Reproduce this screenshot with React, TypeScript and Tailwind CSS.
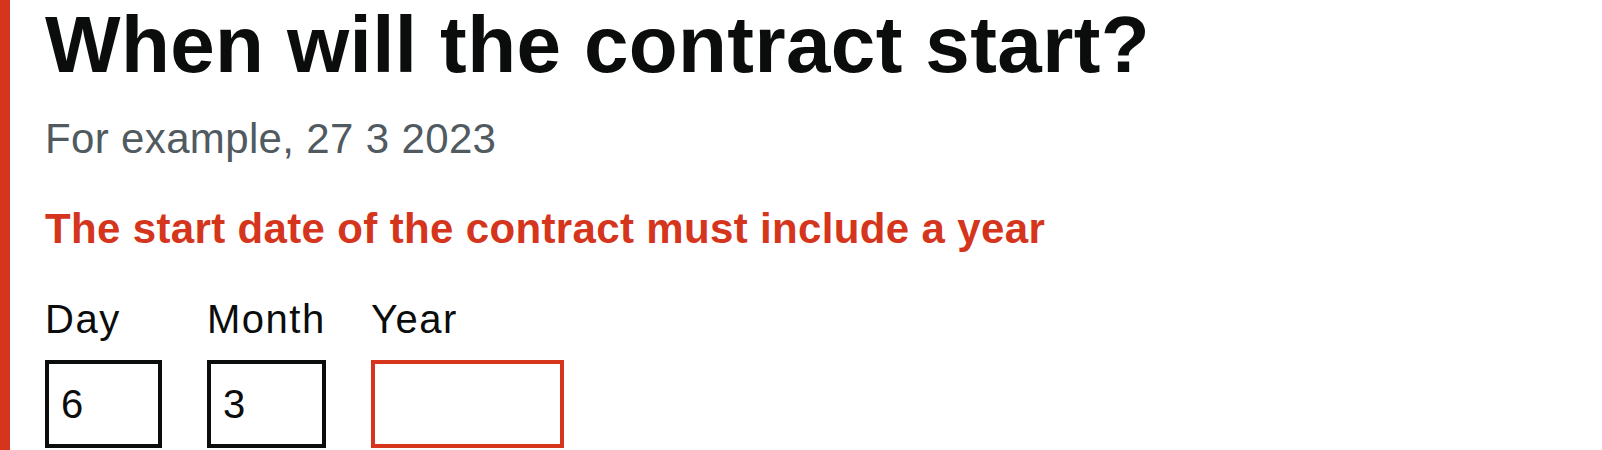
import { useState } from "react";

const FONT = "font-['Liberation_Sans',Arial,sans-serif]";

function DateField({ label, value, width, error, onChange }: {
    label: string;
    value: string;
    width: string;
    error?: boolean;
    onChange: (v: string) => void;
}) {
    return (
        <div className="flex flex-col">
            <label className="text-[40px] leading-[50px] tracking-[1.5px] text-[#0b0c0c]">{label}</label>
            <input
                type="text"
                inputMode="numeric"
                value={value}
                onChange={e => onChange(e.target.value)}
                className={`${width} mt-4 h-[88px] border-4 ${error ? "border-[#d4351c]" : "border-[#0b0c0c]"} bg-white px-3 text-[40px] tracking-[1px] text-[#0b0c0c] outline-none ${FONT}`}
            />
        </div>
    );
}

export default function App() {
    const [day, setDay] = useState("6");
    const [month, setMonth] = useState("3");
    const [year, setYear] = useState("");

    return (
        <div className={`min-h-screen bg-white ${FONT}`}>
            <div className="min-h-screen border-l-[10px] border-[#d4351c] pl-[35px]">
                <h1 className="text-[80px] leading-[90px] tracking-[0.4px] font-bold text-[#0b0c0c]">When will the contract start?</h1>
                <div className="mt-6 text-[42px] leading-[50px] tracking-[0.35px] text-[#505a5f]">For example, 27 3 2023</div>
                <p className="mt-10 text-[42px] leading-[50px] tracking-[0.35px] font-bold text-[#d4351c]">The start date of the contract must include a year</p>
                <div className="mt-10 flex gap-[45px]">
                    <DateField label="Day" value={day} width="w-[117px]" onChange={setDay} />
                    <DateField label="Month" value={month} width="w-[119px]" onChange={setMonth} />
                    <DateField label="Year" value={year} width="w-[193px]" error onChange={setYear} />
                </div>
            </div>
        </div>
    );
}
